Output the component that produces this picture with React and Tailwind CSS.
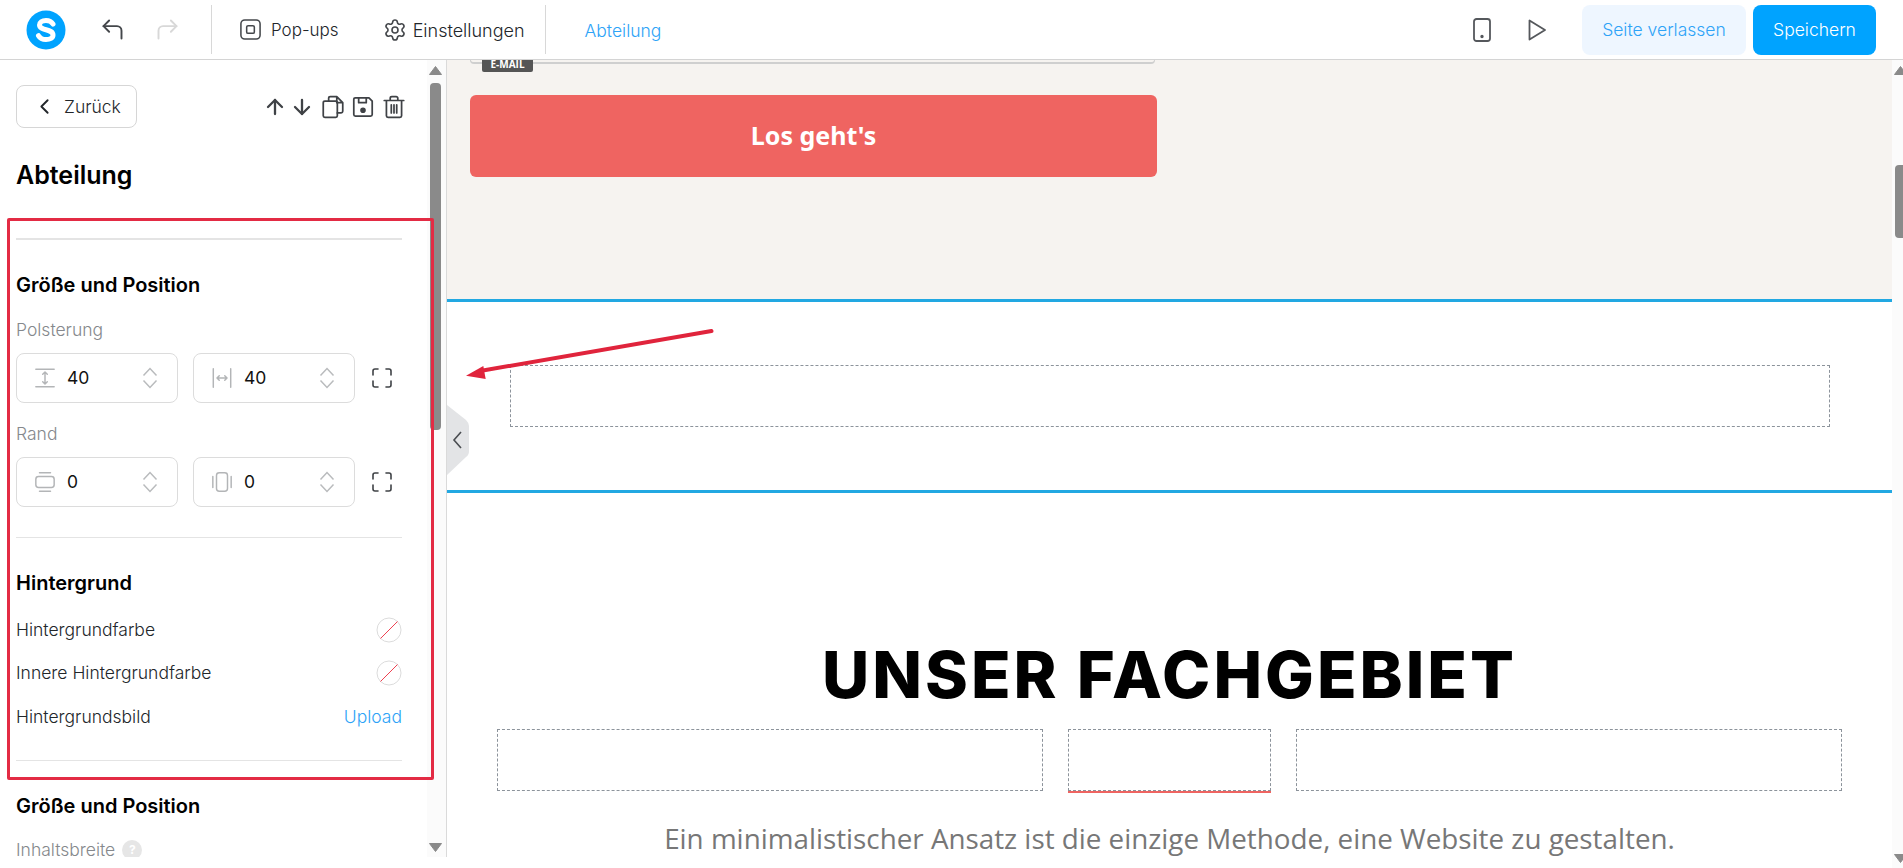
import { ChevronLeft, CornerUpLeft, CornerUpRight, Settings, ArrowUp, ArrowDown } from "lucide-react";

const Svg = ({ size = 22, className = "", children }) => (
  <svg width={size} height={size} viewBox="0 0 24 24" fill="none" stroke="currentColor" strokeWidth="1.6" strokeLinecap="round" strokeLinejoin="round" className={className}>
    {children}
  </svg>
);

// little icons for the spacing inputs
const PadY = () => (
  <Svg>
    <path d="M2 2.500h20M2 21.500h20M12 6v12M9.500 8 12 5.500 14.500 8M9.500 16l2.500 2.500 2.500-2.500" />
  </Svg>
);
const PadX = () => (
  <Svg>
    <path d="M2.500 2v20M21.500 2v20M6.500 12h11M9 9.500 6.500 12 9 14.500M15 9.500l2.500 2.500-2.500 2.500" />
  </Svg>
);
const MarginY = () => (
  <Svg>
    <path d="M6 2h12M6 22h12" />
    <rect x="2" y="6" width="20" height="12" rx="3" />
  </Svg>
);
const MarginX = () => (
  <Svg>
    <path d="M2 6v12M22 6v12" />
    <rect x="6" y="2" width="12" height="20" rx="3" />
  </Svg>
);
const Expand = () => (
  <Svg size={24} className="text-[#3f4246]">
    <path d="M3 9V5a2 2 0 0 1 2-2h3M16 3h3a2 2 0 0 1 2 2v4M21 15v4a2 2 0 0 1-2 2h-3M8 21H5a2 2 0 0 1-2-2v-4" />
  </Svg>
);
const Stepper = () => (
  <svg width="16" height="22" viewBox="0 0 16 22" fill="none" stroke="#b9bbbd" strokeWidth="1.5" className="ml-auto">
    <path d="M1.500 8.500 8 1.500l6.500 7M1.500 13.500 8 20.500l6.500-7" />
  </svg>
);

const Arrow = ({ down }) => (
  <svg width="13" height="9" viewBox="0 0 13 9" fill="#8a8a8a" className={down ? "rotate-180" : ""}>
    <path d="M6.500 0.500 12.500 8.500H0.500Z" stroke="#8a8a8a" strokeLinejoin="round" />
  </svg>
);

function Scrollbar({ thumb, className }) {
  return (
    <div className={`flex flex-col shrink-0 w-[19px] pt-[6px] pb-[5px] bg-[#fbfbfb] ${className}`}>
      <div className="pl-[2px] leading-[0]"><Arrow /></div>
      <div className={`ml-[3px] w-[11px] rounded-[4px] bg-[#8a8a8a] ${thumb}`} />
      <div className="mt-auto pl-[2px] leading-[0]"><Arrow down /></div>
    </div>
  );
}

function NumberInput({ icon, value }) {
  return (
    <div className="flex items-center w-[162px] h-[50px] pl-[17px] pr-[19px] border border-[#dcdcdc] rounded-[8px]">
      <span className="text-[#b3b5b7] leading-[0]">{icon}</span>
      <span className="ml-[11px] text-[17.5px] font-normal text-[#111]">{value}</span>
      <Stepper />
    </div>
  );
}

function SpacingRow({ a, b }) {
  return (
    <div className="flex items-center mt-[11px]">
      <NumberInput icon={a[0]} value={a[1]} />
      <div className="w-[15px]" />
      <NumberInput icon={b[0]} value={b[1]} />
      <div className="ml-[15px] leading-[0]"><Expand /></div>
    </div>
  );
}

const NoColor = () => (
  <svg width="26" height="26" viewBox="0 0 26 26" fill="none">
    <circle cx="13" cy="13" r="12" stroke="#dcdcdc" />
    <path d="M4.500 21.500 21.500 4.500" stroke="#ef4050" />
  </svg>
);

const ColorRow = ({ label, children }) => (
  <div className="flex items-center justify-between h-[43.5px] text-[17.5px] text-[#22262a]">
    <span>{label}</span>
    {children}
  </div>
);

function Sidebar() {
  return (
    <aside className="flex w-[447px] h-[797px] shrink-0 border-r border-[#dadada] overflow-hidden">
      <div className="w-[427px] shrink-0 pl-[16px] pr-[25px]">
        <div className="flex items-center justify-between mt-[25px]">
          <button className="flex items-center w-[121px] h-[43px] pl-[15px] border border-[#d6d6d6] rounded-[8px] text-[17.5px] text-[#22262a]">
            <ChevronLeft size={25} strokeWidth={1.8} />
            <span className="ml-[7px] pt-px">Zurück</span>
          </button>
          <div className="flex items-center text-[#3f4246] -mr-[5px]">
            <ArrowUp size={24} strokeWidth={2.3} />
            <ArrowDown size={24} strokeWidth={2.3} className="ml-[3px]" />
            <Svg size={26} className="ml-[6px]">
              <path d="M8 6.500V4a1.500 1.500 0 0 1 1.500-1.500h6L21 8v8a1.500 1.500 0 0 1-1.500 1.500H16M15.500 2.500V8H21" />
              <rect x="3" y="6.500" width="13" height="15" rx="1.500" />
            </Svg>
            <Svg size={26} className="ml-[4px]">
              <path d="M3.500 5a1.500 1.500 0 0 1 1.500-1.500h12.500l3 3V19a1.500 1.500 0 0 1-1.500 1.500H5A1.500 1.500 0 0 1 3.500 19Z" />
              <path d="M8 3.500V8h7V3.500" />
              <circle cx="12" cy="15" r="1.800" fill="currentColor" />
            </Svg>
            <Svg size={26} className="ml-[5px]">
              <path d="M3 6h18M8.500 6V4a1.500 1.500 0 0 1 1.500-1.500h4A1.500 1.500 0 0 1 15.500 4v2M5 6v14a1.500 1.500 0 0 0 1.500 1.500h11A1.500 1.500 0 0 0 19 20V6M9.500 10v7.500M12 10v7.500M14.500 10v7.500" />
            </Svg>
          </div>
        </div>

        <h2 className="mt-[32px] text-[25px] leading-[31px] font-semibold text-black">Abteilung</h2>

        <div className="mt-[47px] h-[2px] bg-[#e4e4e4]" />
        <h3 className="mt-[32px] text-[20px] leading-[27px] font-semibold text-black">Größe und Position</h3>
        <p className="mt-[19px] text-[17.5px] leading-[24px] text-[#85888c]">Polsterung</p>
        <SpacingRow a={[<PadY />, "40"]} b={[<PadX />, "40"]} />
        <p className="mt-[19px] text-[17.5px] leading-[24px] text-[#85888c]">Rand</p>
        <SpacingRow a={[<MarginY />, "0"]} b={[<MarginX />, "0"]} />

        <div className="mt-[30px] h-[1px] bg-[#e4e4e4]" />
        <h3 className="mt-[32px] text-[20px] leading-[27px] font-semibold text-black">Hintergrund</h3>
        <div className="mt-[11px]">
          <ColorRow label="Hintergrundfarbe"><NoColor /></ColorRow>
          <ColorRow label="Innere Hintergrundfarbe"><NoColor /></ColorRow>
          <ColorRow label="Hintergrundsbild"><span className="text-[#2ea3f7]">Upload</span></ColorRow>
        </div>

        <div className="mt-[21px] h-[1px] bg-[#e4e4e4]" />
        <h3 className="mt-[32px] text-[20px] leading-[27px] font-semibold text-black">Größe und Position</h3>
        <div className="flex items-center mt-[18px] text-[17.5px] leading-[24px] text-[#85888c]">
          Inhaltsbreite
          <span className="ml-[7px] flex items-center justify-center w-[20px] h-[20px] rounded-full bg-[#e6e6e6] text-white text-[12px] font-bold">?</span>
        </div>
      </div>
      <Scrollbar thumb="mt-[8px] h-[347px]" />
    </aside>
  );
}

const DashedBox = ({ className }) => <div className={`h-[62px] border border-dashed border-[#8c939b] ${className}`} />;

function Canvas() {
  return (
    <main className="flex-1 flex overflow-hidden">
      <div className="w-[1445px] shrink-0">
        <section className="relative h-[239px] bg-[#f6f3f0] overflow-hidden">
          <div className="ml-[23px] w-[685px] h-[4px] border-x border-b-2 border-[#cfcfcf] rounded-b-[8px]" />
          <span className="absolute left-[35px] -top-[4px] w-[51px] h-[16px] flex items-end justify-center pb-[2px] rounded-[2px] bg-[#555] text-white text-[10px] leading-[12px] font-bold font-['Open_Sans']">E-MAIL</span>
          <button className="block ml-[23px] mt-[31px] w-[687px] h-[82px] rounded-[6px] bg-[#ef6461] text-white text-[25px] font-bold font-['Noto_Sans']">Los geht's</button>
        </section>

        <section className="h-[194px] border-y-[3px] border-[#22a8e2] bg-white pt-[63px] pl-[63px] pr-[62px]">
          <DashedBox />
        </section>

        <section className="bg-white pt-[142px]">
          <h1 className="text-center text-[65px] leading-[80px] font-extrabold text-black tracking-[0.046em] font-['Inter']">UNSER FACHGEBIET</h1>
          <div className="flex items-start gap-[25px] mt-[14px] ml-[50px]">
            <DashedBox className="w-[546px]" />
            <div className="border-b-2 border-[#ef6461]">
              <DashedBox className="w-[203px]" />
            </div>
            <DashedBox className="w-[546px]" />
          </div>
          <p className="mt-[27px] text-center text-[27.8px] leading-[36px] font-normal text-[#777] font-['Open_Sans']">
            Ein minimalistischer Ansatz ist die einzige Methode, eine Website zu gestalten.
          </p>
        </section>
      </div>
      <Scrollbar thumb="mt-[90px] h-[73px]" />
    </main>
  );
}

function Topbar() {
  return (
    <header className="flex items-center h-[60px] shrink-0 border-b border-[#d4d4d4] bg-white text-[17.5px] text-[#22262a]">
      <svg width="40" height="40" viewBox="0 0 40 40" className="ml-[26px] shrink-0">
        <circle cx="20" cy="20" r="19.500" fill="#00a3ff" />
        <path d="M27 14c-1.500-2.500-4-3.500-7-3.500-4 0-6.500 1.800-6.500 4.500 0 6 13.500 3.500 13.500 10 0 3-3 4.500-7 4.500-3.500 0-6-1.200-7.500-3.800" fill="none" stroke="#fff" strokeWidth="5" strokeLinecap="round" />
      </svg>
      <CornerUpLeft size={27} strokeWidth={1.7} className="ml-[33px] text-[#44474b]" />
      <CornerUpRight size={27} strokeWidth={1.7} className="ml-[28px] text-[#d8d8d8]" />
      <div className="ml-[30px] w-px h-[49px] bg-[#d8d8d8]" />
      <Svg size={23} className="ml-[27px] text-[#44474b]">
        <rect x="2" y="2" width="20" height="20" rx="4" />
        <rect x="8" y="8" width="8" height="8" rx="1.500" />
      </Svg>
      <span className="ml-[9px] mt-[2px] text-[17px]">Pop-ups</span>
      <Settings size={24} strokeWidth={1.6} className="ml-[44px] text-[#44474b]" />
      <span className="ml-[6px] mt-[2px] text-[18px]">Einstellungen</span>
      <div className="ml-[20px] w-px h-[49px] bg-[#d8d8d8]" />
      <span className="ml-[39px] mt-[4px] text-[#2ea3f7]">Abteilung</span>
      <svg width="18" height="24" viewBox="0 0 18 24" fill="none" stroke="#55585c" strokeWidth="1.8" className="ml-auto">
        <rect x="1" y="1" width="16" height="22" rx="2.500" />
        <circle cx="9" cy="18.500" r="0.800" fill="#55585c" />
      </svg>
      <svg width="18" height="22" viewBox="0 0 18 22" fill="none" stroke="#55585c" strokeWidth="1.8" strokeLinejoin="round" className="ml-[37px]">
        <path d="M1.500 1.500v19L17 11Z" />
      </svg>
      <button className="ml-[36px] w-[164px] h-[50px] pt-[2px] rounded-[8px] bg-[#eef6ff] text-[#2ea3f7]">Seite verlassen</button>
      <button className="ml-[7px] mr-[27px] w-[123px] h-[50px] pt-[2px] rounded-[8px] bg-[#00a3ff] text-white">Speichern</button>
    </header>
  );
}

export default function App() {
  return (
    <div className="relative flex flex-col h-screen overflow-hidden bg-white font-light font-['Inter',sans-serif]">
      <Topbar />
      <div className="flex flex-1 min-h-0">
        <Sidebar />
        <Canvas />
      </div>

      {/* sidebar collapse tab */}
      <svg width="22" height="70" viewBox="0 0 22 70" className="absolute left-[447px] top-[405px]">
        <path d="M0 0 19 15Q22 18 22 21V46Q22 50 19 52L0 70Z" fill="#e3e4e6" />
        <path d="M14 27 7 35l7 8" fill="none" stroke="#4a4d51" strokeWidth="1.600" />
      </svg>

      {/* red annotation on top of the screenshot */}
      <div className="absolute left-[7px] top-[218px] w-[427px] h-[562px] border-[3px] border-[#e32b44] rounded-[2px] pointer-events-none" />
      <svg width="260" height="60" viewBox="0 0 260 60" className="absolute left-[460px] top-[325px] pointer-events-none">
        <path d="M251.500 6 20 46" stroke="#e0243c" strokeWidth="4" strokeLinecap="round" />
        <path d="M6 50.700 23.300 41 25.700 54Z" fill="#e0243c" />
      </svg>
    </div>
  );
}
